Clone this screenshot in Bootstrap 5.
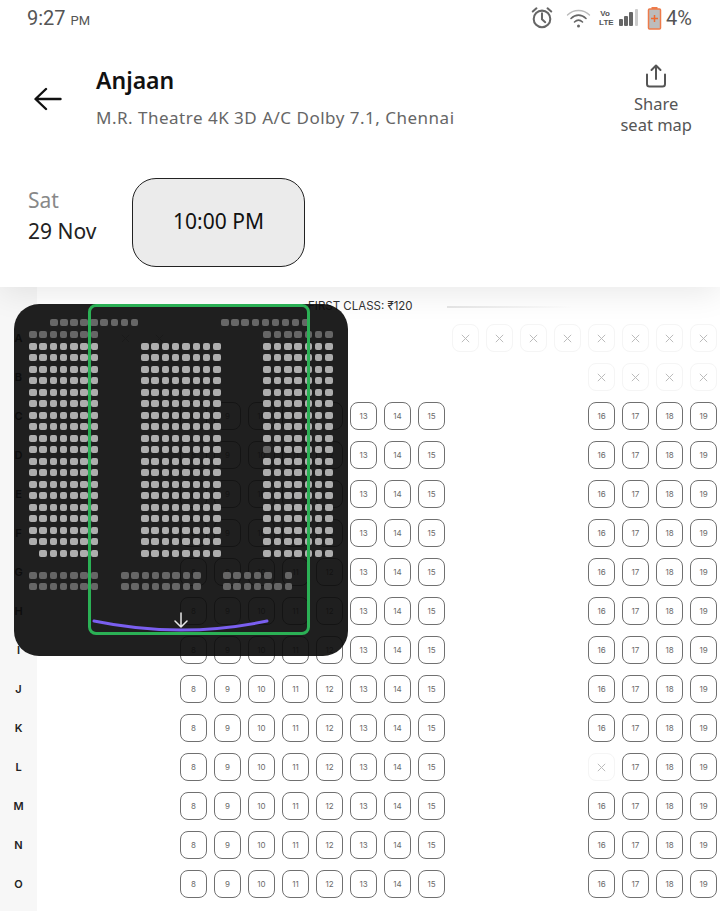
<!DOCTYPE html>
<html lang="en">
<head>
    <meta charset="UTF-8">
    <meta name="viewport" content="width=device-width, initial-scale=1.0">
    <title>Anjaan - Seat map</title>
    <link href="https://cdn.jsdelivr.net/npm/bootstrap@5.3.0/dist/css/bootstrap.min.css" rel="stylesheet">
    <style>
        html, body { height: 911px; overflow: hidden; }
        body { font-family: "Noto Sans", "Liberation Sans", sans-serif; background: #fff; color: #111; }
        .page-wrap { position: relative; height: 911px; overflow: hidden; }

        /* status bar */
        .status-bar { height: 36px; padding: 0 28px 0 27px; color: #555; font-family: Roboto, sans-serif; }
        .clock { font-size: 20px; }
        .clock span { font-size: 13px; }
        .volte { font-size: 8px; line-height: 9.5px; font-weight: 700; text-align: center; font-family: "Liberation Sans", sans-serif; width: 12px; }
        .batt-text { font-size: 20px; margin-left: -4px; }

        /* header */
        .top-panel { position: relative; z-index: 1; height: 287px; flex: none; background: #fff; box-shadow: 0 6px 30px rgba(0, 0, 0, .09); }
        .show-head { height: 76px; margin-top: 24px; padding: 0 28px 0 34px; }
        .back-btn { width: 62px; flex: none; }
        .show-title { font-size: 23px; line-height: 30px; font-weight: 600; margin-bottom: 10px; }
        .show-venue { font-size: 17px; line-height: 26px; color: #666; letter-spacing: .5px; }
        .share-box { font-size: 16.5px; line-height: 21px; color: #555; text-align: center; padding-top: 2px; }
        .share-icon { margin-bottom: 5px; }
        .date-row { margin-top: 42px; padding-left: 28px; }
        .date-col { width: 104px; padding-top: 7px; }
        .date-day { font-size: 21px; line-height: 30px; color: #888; margin-bottom: 1px; }
        .date-num { font-size: 21px; line-height: 30px; color: #222; }
        .time-chip { width: 173px; height: 89px; background: #ebebeb; border: 1px solid #222; border-radius: 24px; font-size: 21px; padding-bottom: 2px; }

        /* seats */
        .seat-area { height: 624px; }
        .label-col { width: 37px; flex: none; background: #f7f7f7; padding-top: 37px; }
        .row-label { height: 39px; line-height: 28px; text-align: center; font-family: Inter, sans-serif; font-size: 11px; font-weight: 600; color: #222; }
        .class-head { height: 37px; padding: 10px 0 0 271px; font-family: Inter, sans-serif; font-size: 11.5px; line-height: 18px; color: #333; }
        .class-line { width: 125px; height: 2px; margin: 9px 0 0 34px; background: linear-gradient(90deg, #e6e6e6, #fff); }
        .seat-row { height: 39px; padding-left: 7px; gap: 7px; }
        .seat-slot { width: 27px; height: 28px; flex: none; border: 1px solid #707070; border-radius: 8px; font-family: Inter, sans-serif; font-size: 8px; color: #6a6a6a; }
        .seat-none { visibility: hidden; }
        .seat-off { border-color: #f5f5f5; }
        .seat-off svg { width: 9px; height: 9px; stroke: #bbb; }

        /* mini map */
        .mini-map { position: absolute; z-index: 2; left: 14px; top: 304px; width: 334px; height: 352px; padding: 15px 0 0 15px; border-radius: 25px; background: rgba(12, 12, 12, .92); }
        .mini-top { height: 7px; margin-bottom: 5px; }
        .mini-seg-a { margin-left: 21px; gap: 2.6px; }
        .mini-seg-b { margin-left: 83px; gap: 2.6px; }
        .mini-main { gap: 42.8px; }
        .mini-line { gap: 2.8px; height: 7px; margin-bottom: 4.53px; }
        .mini-dot { width: 7.5px; height: 7px; flex: none; border-radius: 2px; background: #adadad; }
        .mini-dim { background: #666; }
        .mini-blank { background: transparent; }
        .mini-bottom { margin-top: 10.5px; }
        .mini-cell-a { width: 92px; }
        .mini-cell-b { width: 102px; }
        .view-box { position: absolute; left: 74px; top: 0; width: 222px; height: 331px; border: 3px solid #2bb055; border-radius: 8px; }
        .mini-screen { position: absolute; left: 78px; top: 308px; }
    </style>
</head>
<body>

<div class="page-wrap d-flex flex-column">
    <div class="top-panel">
        <div class="status-bar d-flex align-items-center justify-content-between">
            <div class="clock">9:27 <span>PM</span></div>
            <div class="d-flex align-items-center gap-2">
                <svg width="24" height="24" viewBox="0 0 26 26" fill="none" stroke="#666" stroke-width="2.2">
                    <circle cx="13" cy="14" r="9"/>
                    <path d="M13 8v6.500l3.500 3M3 6l4-3.500M23 6l-4-3.500" stroke-linecap="round"/>
                </svg>
                <svg class="ms-1" width="25" height="20" viewBox="0 0 24 20" fill="none" stroke-linecap="round">
                    <path d="M1 7C7 1 17 1 23 7" stroke="#bbb" stroke-width="1.4"/>
                    <path d="M4.500 10.500C9 6 15 6 19.500 10.500" stroke="#666" stroke-width="1.6"/>
                    <path d="M8 14c2.400-2.200 5.600-2.200 8 0" stroke="#666" stroke-width="1.6"/>
                    <circle cx="12" cy="18" r="1.500" fill="#666"/>
                </svg>
                <div class="volte">Vo<br>LTE</div>
                <svg width="20" height="18" viewBox="0 0 20 18" fill="#666">
                    <rect x="0" y="10" width="4" height="7" rx="1"/>
                    <rect x="5" y="7" width="4" height="10" rx="1"/>
                    <rect x="10" y="3" width="4" height="14" rx="1"/>
                    <rect x="16" y="0" width="3" height="17" rx="1" fill="#ccc"/>
                </svg>
                <svg width="15" height="23" viewBox="0 0 14 23">
                    <rect x="4" y="0" width="6" height="3" fill="#ee7b4a"/>
                    <rect x="1" y="2" width="12" height="20" rx="1" fill="#bcbcbc" stroke="#ee7b4a" stroke-width="1.500"/>
                    <path d="M7 8v7M3.500 11.500h7" stroke="#ee6a30" stroke-width="1.500"/>
                </svg>
                <div class="batt-text">4%</div>
            </div>
        </div>

        <div class="show-head d-flex align-items-center">
            <div class="back-btn">
                <svg width="28" height="24" viewBox="0 0 28 24" fill="none" stroke="#111" stroke-width="2.400" stroke-linecap="round" stroke-linejoin="round">
                    <path d="M26.500 12H2M12 2 1.500 12 12 22"/>
                </svg>
            </div>
            <div class="flex-grow-1">
                <div class="show-title">Anjaan</div>
                <div class="show-venue">M.R. Theatre 4K 3D A/C Dolby 7.1, Chennai</div>
            </div>
            <div class="share-box">
                <svg class="share-icon d-block mx-auto" width="22" height="24" viewBox="0 0 22 24" fill="none" stroke="#555" stroke-width="2" stroke-linecap="round" stroke-linejoin="round">
                    <path d="M11 15V2M6.500 6 11 1.500 15.500 6M2 10.500V20a2.500 2.500 0 0 0 2.500 2.500h13A2.500 2.500 0 0 0 20 20v-9.500"/>
                </svg>
                Share<br>seat map
            </div>
        </div>

        <div class="date-row d-flex align-items-start">
            <div class="date-col">
                <div class="date-day">Sat</div>
                <div class="date-num">29 Nov</div>
            </div>
            <div class="time-chip d-flex align-items-center justify-content-center">10:00 PM</div>
        </div>
    </div>

    <div class="seat-area d-flex">
        <div class="label-col" id="rowLabels"></div>
        <div class="flex-grow-1">
            <div class="class-head d-flex">
                <span>FIRST CLASS: ₹120</span>
                <div class="class-line"></div>
            </div>
            <div id="seatRows"></div>
        </div>
    </div>

    <div class="mini-map">
        <div class="mini-top d-flex" id="miniTop"></div>
        <div class="mini-main d-flex" id="miniMain"></div>
        <div class="mini-bottom" id="miniBottom"></div>
        <div class="view-box"></div>
        <svg class="mini-screen" width="178" height="24" viewBox="0 0 178 24" fill="none" stroke-linecap="round" stroke-linejoin="round">
            <path d="M2 9Q89 27 175 9" stroke="#7a5ff0" stroke-width="3"/>
            <path d="M89 1V15M83 9l6 6 6-6" stroke="#e8e8e8" stroke-width="1.500"/>
        </svg>
    </div>
</div>

<script>
    var rows = "ABCDEFGHIJKLMNO".split("");
    var xIcon = '<svg viewBox="0 0 11 11" fill="none" stroke-width="1.200"><path d="M1 1l9 9M10 1l-9 9"/></svg>';

    // seats, 20 slots per row. slot 4 is seat 8, slot 12-15 is the aisle
    function seatCell(row, slot) {
        var off = false;
        var number = 0;
        if (slot >= 4 && slot <= 11) number = slot + 4;
        if (slot >= 16) number = slot;
        if (row === "A") {
            off = slot === 2 || slot === 3 || slot >= 12;
        } else if (row === "B") {
            off = slot >= 16;
        } else if (row === "L" && slot === 16) {
            off = true;
        }
        if (off) return '<div class="seat-slot seat-off d-flex align-items-center justify-content-center">' + xIcon + '</div>';
        if (!number || row === "A" || row === "B") return '<div class="seat-slot seat-none"></div>';
        return '<div class="seat-slot d-flex align-items-center justify-content-center">' + number + '</div>';
    }

    var labelsHtml = "";
    var rowsHtml = "";
    rows.forEach(function (row) {
        labelsHtml += '<div class="row-label">' + row + '</div>';
        rowsHtml += '<div class="seat-row d-flex">';
        for (var i = 0; i < 20; i++) rowsHtml += seatCell(row, i);
        rowsHtml += '</div>';
    });
    document.getElementById("rowLabels").innerHTML = labelsHtml;
    document.getElementById("seatRows").innerHTML = rowsHtml;

    // mini map dots: b bright, d dim, _ blank
    function miniDots(pattern) {
        return pattern.split("").map(function (c) {
            return '<div class="mini-dot' + (c === "d" ? " mini-dim" : c === "_" ? " mini-blank" : "") + '"></div>';
        }).join("");
    }

    function miniLine(pattern) {
        return '<div class="mini-line d-flex">' + miniDots(pattern) + '</div>';
    }

    function miniBlock(width, first, overrides) {
        var html = '<div>' + miniLine(first);
        for (var i = 1; i < 20; i++) {
            html += miniLine(overrides[i] || "b".repeat(width));
        }
        return html + '</div>';
    }

    document.getElementById("miniTop").innerHTML =
        '<div class="mini-seg-a d-flex">' + miniDots("ddddddddd") + '</div>' +
        '<div class="mini-seg-b d-flex">' + miniDots("ddddddddd") + '</div>';

    document.getElementById("miniMain").innerHTML =
        miniBlock(7, "ddddddd", { 19: "_bbbbbb" }) +
        miniBlock(8, "________", {}) +
        miniBlock(7, "ddddddd", { 10: "dbbbbbb" });

    var bottom = [["ddddddd", "dddddddd", "ddddd_d"], ["ddddddd", "dddddddd", "ddddddd"]];
    document.getElementById("miniBottom").innerHTML = bottom.map(function (b) {
        return '<div class="d-flex">' +
            '<div class="mini-cell-a">' + miniLine(b[0]) + '</div>' +
            '<div class="mini-cell-b">' + miniLine(b[1]) + '</div>' +
            '<div>' + miniLine(b[2]) + '</div></div>';
    }).join("");
</script>
<script src="https://cdn.jsdelivr.net/npm/bootstrap@5.3.0/dist/js/bootstrap.bundle.min.js"></script>
</body>
</html>
